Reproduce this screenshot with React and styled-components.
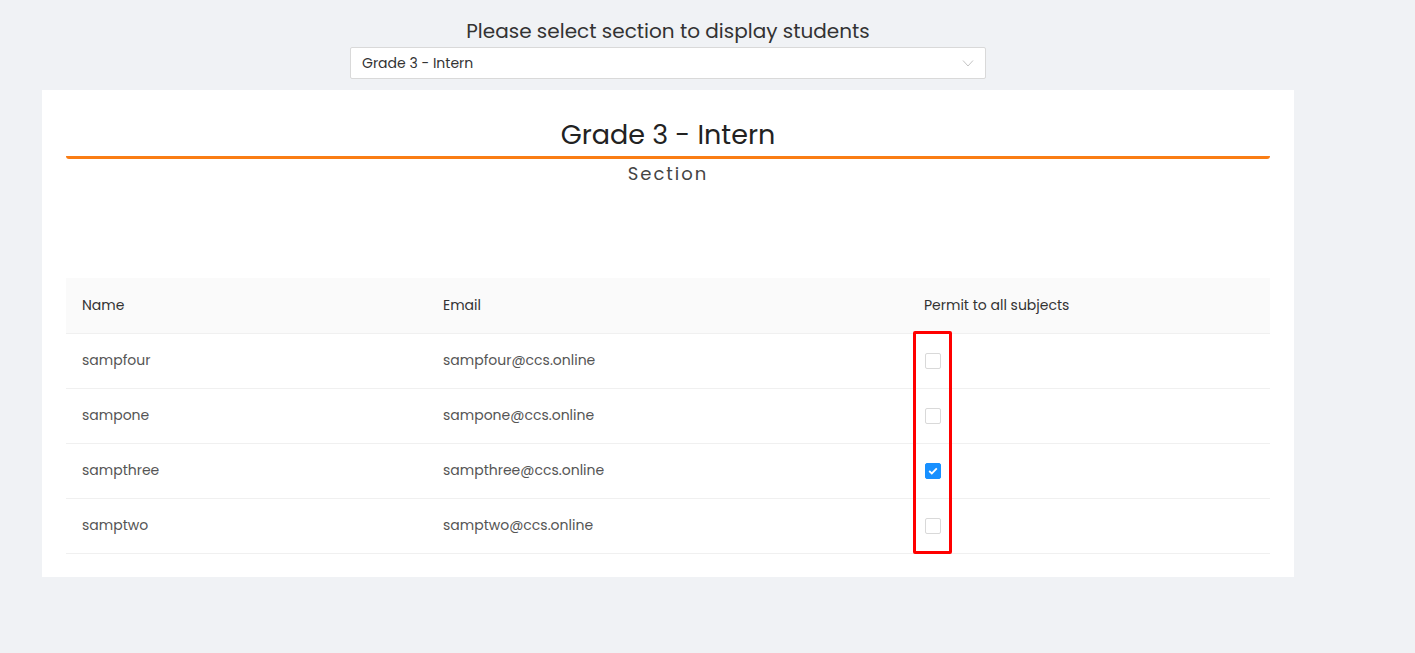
import React from "react";
import styled, { createGlobalStyle } from "styled-components";

const Global = createGlobalStyle`
  html, body { margin: 0; padding: 0; }
  body {
    background: #f0f2f5;
    font-family: "Poppins", "Open Sans", "Noto Sans", sans-serif;
    color: #333;
  }
`;

const Page = styled.div`
  width: 1415px;
  min-height: 653px;
  padding: 16px 0 0 42px;
  box-sizing: border-box;
`;

const Selector = styled.div`
  width: 1252px;
  display: flex;
  flex-direction: column;
  align-items: center;
`;

const Prompt = styled.div`
  font-size: 20px;
  line-height: 31px;
  color: #333;
`;

const Select = styled.div`
  width: 636px;
  height: 32px;
  box-sizing: border-box;
  background: #fff;
  border: 1px solid #d9d9d9;
  border-radius: 2px;
  display: flex;
  align-items: center;
  justify-content: space-between;
  padding: 0 11px;
  font-size: 14px;
  color: #333;
`;

const Card = styled.div`
  width: 1252px;
  margin-top: 11px;
  background: #fff;
  padding: 24px 24px 23px;
  box-sizing: border-box;
`;

const Heading = styled.div`
  text-align: center;
  font-size: 27px;
  line-height: 42px;
  color: #222;
`;

const Rule = styled.div`
  height: 3px;
  background: #fa7d14;
  border-radius: 0 0 3px 3px;
`;

const Sub = styled.div`
  text-align: center;
  font-size: 18px;
  letter-spacing: 2px;
  line-height: 30px;
  color: #444;
`;

const TableWrap = styled.div`
  position: relative;
  margin-top: 89px;
`;

const Table = styled.table`
  width: 100%;
  border-collapse: collapse;
  table-layout: fixed;
  font-size: 14px;
`;

const Th = styled.th`
  background: #fafafa;
  text-align: left;
  font-weight: 400;
  color: #333;
  height: 55px;
  padding: 0 16px;
  border-bottom: 1px solid #f0f0f0;
  box-sizing: border-box;
`;

const Td = styled.td`
  height: 55px;
  padding: 0 16px;
  color: #555;
  border-bottom: 1px solid #f0f0f0;
  box-sizing: border-box;
`;

const Box = styled.span`
  display: inline-flex;
  align-items: center;
  justify-content: center;
  width: 16px;
  height: 16px;
  box-sizing: border-box;
  border-radius: 2px;
  border: 1px solid ${(p) => (p.$checked ? "#1890ff" : "#d9d9d9")};
  background: ${(p) => (p.$checked ? "#1890ff" : "#fff")};
  vertical-align: middle;
  margin-left: 1px;
`;

const Highlight = styled.div`
  position: absolute;
  left: 847px;
  top: 53px;
  width: 39px;
  height: 223px;
  border: 3px solid #f00;
  box-sizing: border-box;
  border-radius: 2px;
  pointer-events: none;
`;

const rows = [
  { name: "sampfour", email: "sampfour@ccs.online", checked: false },
  { name: "sampone", email: "sampone@ccs.online", checked: false },
  { name: "sampthree", email: "sampthree@ccs.online", checked: true },
  { name: "samptwo", email: "samptwo@ccs.online", checked: false },
];

function Chevron() {
  return (
    <svg width="12" height="12" viewBox="0 0 12 12" fill="none">
      <path d="M1 3.5 L6 9 L11 3.5" stroke="#c4c4c4" strokeWidth="1" />
    </svg>
  );
}

function Check() {
  return (
    <svg width="10" height="8" viewBox="0 0 10 8" fill="none">
      <path d="M1.2 4 L3.8 6.4 L8.8 1.4" stroke="#fff" strokeWidth="1.8" />
    </svg>
  );
}

export default function App() {
  return (
    <>
      <Global />
      <Page>
        <Selector>
          <Prompt>Please select section to display students</Prompt>
          <Select>
            <span>Grade 3 - Intern</span>
            <Chevron />
          </Select>
        </Selector>
        <Card>
          <Heading>Grade 3 - Intern</Heading>
          <Rule />
          <Sub>Section</Sub>
          <TableWrap>
            <Table>
              <colgroup>
                <col style={{ width: "361px" }} />
                <col style={{ width: "481px" }} />
                <col style={{ width: "362px" }} />
              </colgroup>
              <thead>
                <tr>
                  <Th>Name</Th>
                  <Th>Email</Th>
                  <Th>Permit to all subjects</Th>
                </tr>
              </thead>
              <tbody>
                {rows.map((r) => (
                  <tr key={r.name}>
                    <Td>{r.name}</Td>
                    <Td>{r.email}</Td>
                    <Td>
                      <Box $checked={r.checked}>{r.checked && <Check />}</Box>
                    </Td>
                  </tr>
                ))}
              </tbody>
            </Table>
            <Highlight />
          </TableWrap>
        </Card>
      </Page>
    </>
  );
}
